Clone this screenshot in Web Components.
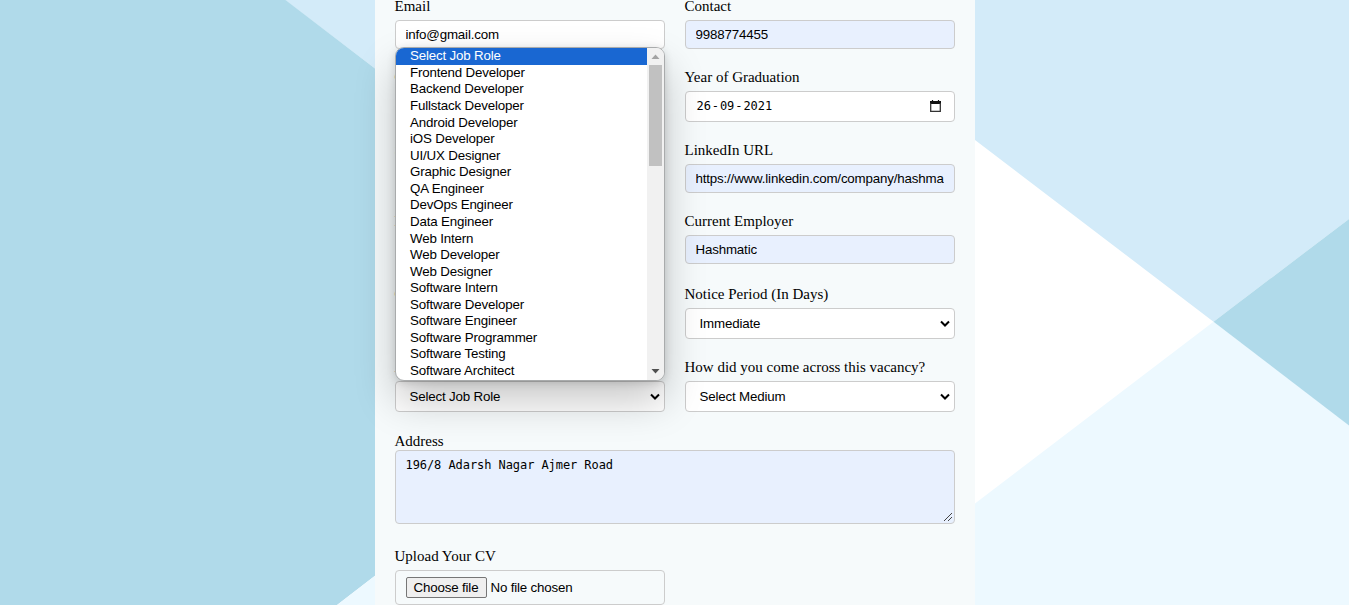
<!DOCTYPE html>
<html lang="en">
<head>
<meta charset="utf-8">
<title>Job Application</title>
<style>
  html, body { margin: 0; height: 605px; overflow: hidden; background: #fff; }
</style>
</head>
<body>
<job-page></job-page>
<script>
const define = (name, html, setup) => {
  const t = document.createElement('template');
  t.innerHTML = html;
  customElements.define(name, class extends HTMLElement {
    constructor() {
      super();
      this.attachShadow({ mode: 'open' }).append(t.content.cloneNode(true));
    }
    connectedCallback() { if (setup) setup(this, this.shadowRoot); }
  });
};

define('poly-backdrop', `
<style>
  :host { display: block; width: 1349px; height: 605px; }
  svg { display: block; }
</style>
<svg width="1349" height="605" viewBox="0 0 1349 605">
  <rect width="1349" height="605" fill="#fff"/>
  <path d="M285 0H1349V219L1213.5 321.7L975 140L375 68.5Z" fill="#d3ebf9"/>
  <path d="M0 0H285.5L375 68.5H400V556.5L337 605H0Z" fill="#b0daea"/>
  <path d="M337 605L400 556.5L975 503.5L1213.5 321.7L1349 425V605Z" fill="#edf9ff"/>
  <path d="M1349 219V425.5L1213.5 321.7Z" fill="#b0daea"/>
</svg>`);

define('form-field', `
<style>
  :host { display: flex; flex-direction: column; min-width: 0; font: 15px/17px "Liberation Serif", serif; color: #000; }
  .label { height: 22px; white-space: nowrap; }
  :host([wide]) { grid-column: 1 / 3; }
  :host([wide]) .label { height: 17px; }
</style>
<div class="label"></div><slot></slot>`,
(el, root) => { root.querySelector('.label').textContent = el.getAttribute('label'); });

define('text-box', `
<style>
  :host { display: flex; align-items: center; box-sizing: border-box; height: 29px; padding: 0 10px;
    border: 1px solid #ccc; border-radius: 4px; background: #fff; font: 13.333px/15px "Liberation Sans", sans-serif; letter-spacing: -.17px; }
  :host([filled]) { background: #e8f0fe; }
  .t { overflow: hidden; white-space: nowrap; }
</style>
<div class="t"><slot></slot></div>`);

define('date-box', `
<style>
  :host { display: flex; align-items: center; justify-content: space-between; box-sizing: border-box; height: 31px;
    padding: 0 12px 0 10px; border: 1px solid #ccc; border-radius: 4px; background: #fff;
    font: 12px/15px "DejaVu Sans Mono", monospace; letter-spacing: -0.07px; }
  .d { display: flex; }
  .d span { padding: 0 0 0 1px; }
  svg { display: block; margin: 0 1px 1px 0; }
</style>
<div class="d"><span>26</span><span>-</span><span>09</span><span>-</span><span>2021</span></div>
<svg width="11" height="12" viewBox="0 0 11 12"><path d="M2.5 0V2M8.5 0V2" stroke="#111" stroke-width="1.2"/><path d="M0 1H11V4H0Z" fill="#111"/><path d="M.7 3V11.3H10.300V3" fill="none" stroke="#333" stroke-width="1.3"/></svg>`);

define('select-box', `
<style>
  :host { display: flex; align-items: center; justify-content: space-between; box-sizing: border-box; height: 31px;
    padding: 0 4px 0 14px; border: 1px solid #ccc; border-radius: 4px; background: #fff;
    font: 13.333px/15px "Liberation Sans", sans-serif; letter-spacing: -.17px; }
  svg { display: block; }
</style>
<span><slot></slot></span>
<svg width="10" height="8" viewBox="0 0 10 8"><path d="M1 1.5L5 5.500L9 1.5" fill="none" stroke="#000" stroke-width="2"/></svg>`);

define('text-area', `
<style>
  :host { display: flex; justify-content: space-between; box-sizing: border-box; height: 74px; padding: 7px 1px 1px 10px;
    border: 1px solid #ccc; border-radius: 4px; background: #e8f0fe;
    font: 12px/15px "DejaVu Sans Mono", monospace; letter-spacing: -0.07px; }
  svg { display: block; align-self: flex-end; }
</style>
<span><slot></slot></span>
<svg width="10" height="10" viewBox="0 0 10 10"><path d="M1 9L9 1M5 9L9 5" stroke="#444" fill="none"/></svg>`);

define('file-box', `
<style>
  :host { display: flex; align-items: center; gap: 4px; box-sizing: border-box; height: 35px; padding: 0 10px;
    border: 1px solid #ccc; border-radius: 4px; font: 13.333px/15px "Liberation Sans", sans-serif; letter-spacing: -.17px; }
  .b { box-sizing: border-box; height: 21px; width: 81px; text-align: center; padding: 2px 0; white-space: nowrap;
    border: 1px solid #767676; border-radius: 2px; background: #efefef; }
</style>
<span class="b">Choose file</span><span>No file chosen</span>`);

define('option-popup', `
<style>
  :host { display: flex; box-sizing: border-box; width: 270px; height: 334px; border: 1px solid #a9abac; border-radius: 9px;
    background: #fff; overflow: hidden; font: 13.333px/16.57px "Liberation Sans", sans-serif; letter-spacing: -.17px; color: #000;
    box-shadow: 0 20px 40px rgba(0,0,0,.22), 0 2px 8px rgba(0,0,0,.14); }
  .list { flex: 1; }
  .list div { height: 16.57px; padding-left: 14px; white-space: nowrap; }
  .list .on { height: 17px; margin-bottom: -.1px; background: #1967d2; color: #fff; }
  .bar { width: 17px; display: flex; flex-direction: column; align-items: center; background: #f1f1f1; }
  .bar svg { display: block; flex: none; }
  .thumb { width: 13px; height: 101px; background: #c1c1c1; }
  .gap { flex: 1; }
</style>
<div class="list"></div>
<div class="bar">
  <svg width="17" height="17" viewBox="0 0 17 17"><path d="M4.5 11L8.5 6.5L12.5 11Z" fill="#a3a3a3"/></svg>
  <div class="thumb"></div><div class="gap"></div>
  <svg width="17" height="17" viewBox="0 0 17 17"><path d="M4.5 6L8.5 10.5L12.5 6Z" fill="#505050"/></svg>
</div>`,
(el, root) => {
  const list = root.querySelector('.list');
  ['Select Job Role', 'Frontend Developer', 'Backend Developer', 'Fullstack Developer', 'Android Developer', 'iOS Developer',
   'UI/UX Designer', 'Graphic Designer', 'QA Engineer', 'DevOps Engineer', 'Data Engineer', 'Web Intern', 'Web Developer',
   'Web Designer', 'Software Intern', 'Software Developer', 'Software Engineer', 'Software Programmer', 'Software Testing',
   'Software Architect'].forEach((name, i) => {
    const d = document.createElement('div');
    d.textContent = name;
    if (!i) d.className = 'on';
    list.append(d);
  });
});

define('job-page', `
<style>
  :host { display: grid; width: 1349px; height: 605px; overflow: hidden; position: relative; }
  poly-backdrop, .panel { grid-area: 1 / 1; }
  .panel { box-sizing: border-box; width: 600px; height: 605px; margin: 0 auto; padding: 0 20px; background: #f6fafb;
    display: grid; grid-template-columns: 270px 270px; column-gap: 20px;
    grid-template-rows: 71px 73px 71px 73px 73px 72px 117px 60px; align-content: start; }
  .panel > form-field { margin-top: -2px; }
  option-popup { position: absolute; left: 395px; top: 47px; }
</style>
<poly-backdrop></poly-backdrop>
<div class="panel">
  <form-field label="Email"><text-box>info@gmail.com</text-box></form-field>
  <form-field label="Contact"><text-box filled>9988774455</text-box></form-field>
  <form-field label="C"><select-box></select-box></form-field>
  <form-field label="Year of Graduation"><date-box></date-box></form-field>
  <form-field label="S"><text-box></text-box></form-field>
  <form-field label="LinkedIn URL"><text-box filled>https://www.linkedin.com/company/hashma</text-box></form-field>
  <form-field label="E"><select-box></select-box></form-field>
  <form-field label="Current Employer"><text-box filled>Hashmatic</text-box></form-field>
  <form-field label="C"><select-box></select-box></form-field>
  <form-field label="Notice Period (In Days)"><select-box>Immediate</select-box></form-field>
  <form-field label="A"><select-box>Select Job Role</select-box></form-field>
  <form-field label="How did you come across this vacancy?"><select-box>Select Medium</select-box></form-field>
  <form-field label="Address" wide style="padding-top:2px"><text-area>196/8 Adarsh Nagar Ajmer Road</text-area></form-field>
  <form-field label="Upload Your CV"><file-box></file-box></form-field>
</div>
<option-popup></option-popup>`);
</script>
</body>
</html>
